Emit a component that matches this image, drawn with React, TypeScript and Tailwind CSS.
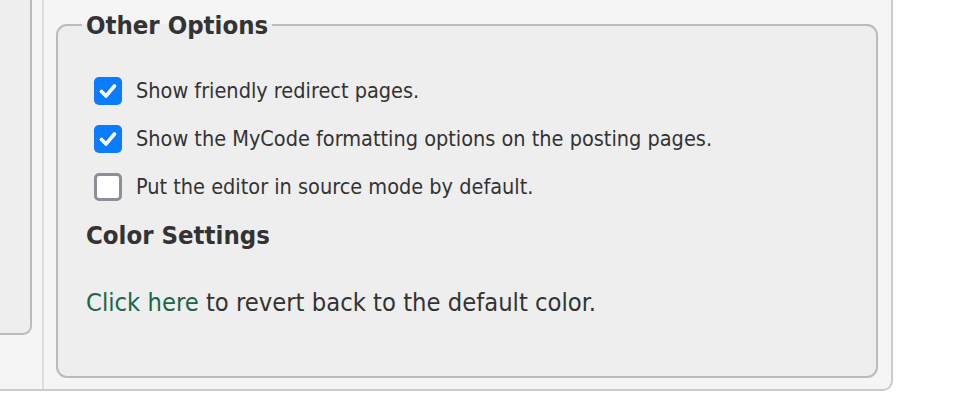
import React from 'react';

const font = { fontFamily: '"DejaVu Sans Condensed", "DejaVu Sans", Tahoma, sans-serif' };

const Checkbox = ({ checked }: { checked: boolean }) => {
  if (checked) {
    return (
      <div className="w-[28px] h-[28px] rounded-[5px] bg-[#0a7cff] flex items-center justify-center shrink-0">
        <svg width="22" height="22" viewBox="0 0 22 22">
          <path d="M4.5 11.5 L9 16 L17.5 6" fill="none" stroke="white" strokeWidth="3.6" strokeLinecap="round" strokeLinejoin="round" />
        </svg>
      </div>
    );
  }
  return <div className="w-[28px] h-[28px] rounded-[5px] bg-white border-[3px] border-[#8e8e98] shrink-0" />;
};

const options = [
  { label: 'Show friendly redirect pages.', checked: true },
  { label: 'Show the MyCode formatting options on the posting pages.', checked: true },
  { label: 'Put the editor in source mode by default.', checked: false },
];

export default function App() {
  return (
    <div className="w-[970px] h-[410px] bg-white text-[#333]" style={font}>
      <div className="w-[893px] h-[391px] flex bg-[#f5f5f5] border-r-2 border-b-2 border-[#ccc] rounded-br-[10px]">
        {/* left column */}
        <div className="w-[44px] h-full border-r-2 border-[#dedede] shrink-0">
          <div className="w-[32px] h-[335px] bg-[#eee] border-r-2 border-b-2 border-[#bbb] rounded-br-[9px]" />
        </div>

        {/* main */}
        <div className="flex-1 pl-[12px] pr-[13px] pt-[10px]">
          <fieldset className="h-[368px] border-2 border-[#bbb] rounded-[11px] bg-[#eee] pl-[24px] pr-4 pt-[27px]">
            <legend className="px-1 text-[25.5px] font-bold leading-[30px]">Other Options</legend>
            <div className="pl-1">
              <div className="pl-2">
                {options.map((o) => (
                  <div key={o.label} className="h-12 flex items-center gap-[14px]">
                    <Checkbox checked={o.checked} />
                    <span className="text-[21.5px] leading-6">{o.label}</span>
                  </div>
                ))}
              </div>
              <h3 className="mt-[9px] text-[25.5px] font-bold leading-[30px]">Color Settings</h3>
              <p className="mt-[38px] text-[25.3px] leading-[30px]">
                <a href="#" className="text-[#1b6549]">Click here</a> to revert back to the default color.
              </p>
            </div>
          </fieldset>
        </div>
      </div>
    </div>
  );
}
